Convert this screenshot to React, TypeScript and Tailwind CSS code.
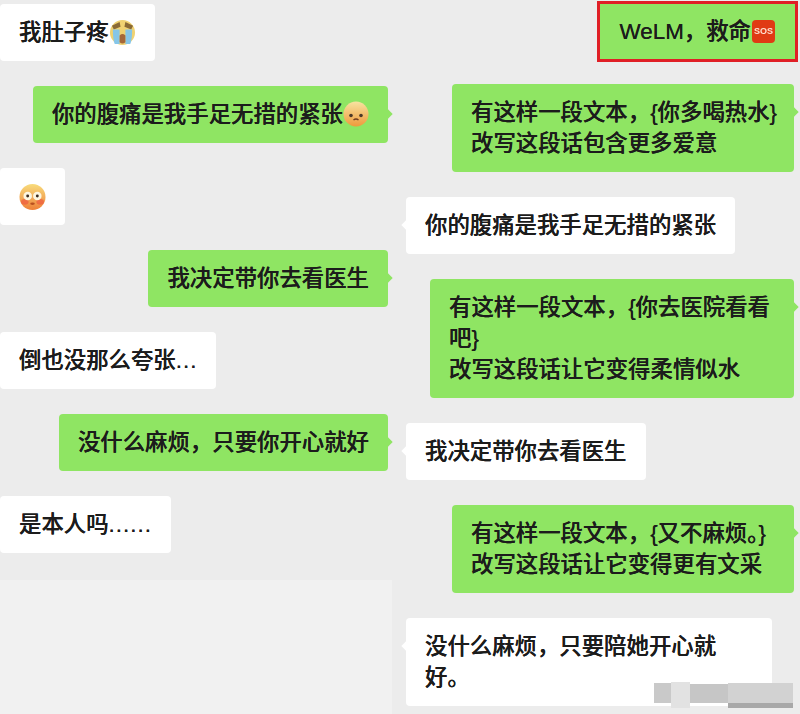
// App.tsx
const bubbleBase =
  "relative whitespace-nowrap rounded-[4px] px-[19px] py-[13px] text-[22.4px] leading-[31px] text-[#1c1c1c] [text-shadow:0_0_0.6px_#1c1c1c]";

function Tail({ side, color }: { side: "left" | "right"; color: string }) {
  return (
    <span
      className={`absolute top-[24px] h-[8px] w-[8px] rotate-45 ${color} ${
        side === "right" ? "right-[-3px]" : "left-[-3px]"
      }`}
    />
  );
}

function Green({ children, className = "" }: { children: React.ReactNode; className?: string }) {
  return (
    <div className={`${bubbleBase} self-end bg-[#8fe563] ${className}`}>
      {children}
      <Tail side="right" color="bg-[#8fe563]" />
    </div>
  );
}

function White({
  children,
  className = "",
  tail = false,
}: {
  children: React.ReactNode;
  className?: string;
  tail?: boolean;
}) {
  return (
    <div className={`${bubbleBase} self-start bg-white ${className}`}>
      {children}
      {tail && <Tail side="left" color="bg-white" />}
    </div>
  );
}

function CryEmoji() {
  return (
    <svg
      viewBox="0 0 28 28"
      className="relative top-[-2px] my-[-8px] inline-block h-[27px] w-[27px] align-middle"
    >
      <circle cx="14" cy="14" r="13" fill="#f0d272" />
      <path d="M3 7 L11 3 L12 8 L5 11Z M25 7 L17 3 L16 8 L23 11Z" fill="#8a6a36" />
      <path d="M4 11h7v15H6q-2-4-2-15zM17 11h7q0 11-2 15h-5z" fill="#86c6e8" />
      <path d="M11 17q3-3 6 0v7q-3 3-6 0z" fill="#a5683a" />
    </svg>
  );
}

function FrownEmoji() {
  return (
    <svg
      viewBox="0 0 26 26"
      className="relative top-[-2px] my-[-8px] inline-block h-[26px] w-[26px] align-middle"
    >
      <defs>
        <linearGradient id="frown" x1="0" y1="0" x2="0" y2="1">
          <stop offset="0" stopColor="#f8e3a0" />
          <stop offset="1" stopColor="#ee9a3c" />
        </linearGradient>
      </defs>
      <circle cx="13" cy="13" r="12.5" fill="url(#frown)" />
      <circle cx="8" cy="14.5" r="1.8" fill="#4d3a2a" />
      <circle cx="18" cy="14.5" r="1.8" fill="#4d3a2a" />
      <path d="M10.5 19q2.5-2 5 0" stroke="#6b3a1f" strokeWidth="1.4" fill="none" />
    </svg>
  );
}

function FlushedEmoji() {
  return (
    <svg viewBox="0 0 28 28" className="block h-[28px] w-[28px]">
      <defs>
        <linearGradient id="flushed" x1="0" y1="0" x2="0" y2="1">
          <stop offset="0" stopColor="#f8dc7c" />
          <stop offset="1" stopColor="#ee8038" />
        </linearGradient>
      </defs>
      <circle cx="14" cy="14" r="13.5" fill="url(#flushed)" />
      <ellipse cx="6" cy="19" rx="4" ry="3" fill="#ee5a40" opacity="0.7" />
      <ellipse cx="22" cy="19" rx="4" ry="3" fill="#ee5a40" opacity="0.7" />
      <circle cx="9" cy="13" r="4.4" fill="#fdf6e0" />
      <circle cx="19" cy="13" r="4.4" fill="#fdf6e0" />
      <circle cx="9" cy="13" r="1.5" fill="#3a2a20" />
      <circle cx="19" cy="13" r="1.5" fill="#3a2a20" />
      <ellipse cx="14" cy="21" rx="2.4" ry="1.2" fill="#b8501f" />
    </svg>
  );
}

function SosEmoji() {
  return (
    <span className="relative top-[-2px] my-[-8px] ml-[1px] inline-flex h-[23px] w-[23px] items-center justify-center rounded-[4px] bg-[#e03a14] align-middle text-[9px] leading-none font-bold text-[#ffe0d0] [text-shadow:none]">
      SOS
    </span>
  );
}

function Watermark() {
  return (
    <div className="absolute top-[682px] left-[654px] flex h-[26px] w-[139px]">
      <div className="mt-[1px] h-[20px] w-[17px] bg-[#c9c9c9]" />
      <div className="h-[26px] w-[19px] bg-[#e2e2e2]" />
      <div className="mt-[2px] h-[19px] w-[38px] bg-[#c6c6c6]" />
      <div className="flex w-[65px] flex-col">
        <div className="mt-[1px] h-[20px] bg-[#d2d2d2]" />
        <div className="h-[5px] bg-[#a8a8a8]" />
      </div>
    </div>
  );
}

export default function App() {
  return (
    <div className="h-[714px] w-[800px] overflow-hidden bg-[#ececec]">
      <div className="relative flex h-[714px] w-[800px] font-['Liberation_Sans','Noto_Sans_CJK_SC',sans-serif] font-medium blur-[0.4px]">
        <div className="relative flex w-[392px] flex-col gap-[25px] pt-[4px] pr-[4px]">
          <White>
            我肚子疼
            <CryEmoji />
          </White>
          <Green>
            你的腹痛是我手足无措的紧张
            <FrownEmoji />
          </Green>
          <White className="w-[65px]">
            <div className="flex h-[31px] items-center">
              <FlushedEmoji />
            </div>
          </White>
          <Green>我决定带你去看医生</Green>
          <White>
            倒也没那么夸张<span className="tracking-[1px]">...</span>
          </White>
          <Green>没什么麻烦，只要你开心就好</Green>
          <White>
            是本人吗<span className="tracking-[1px]">......</span>
          </White>
          <div className="mt-[2px] mr-[-4px] flex-1 bg-[#f1f1f1]" />
        </div>

        <div className="flex w-[408px] flex-col gap-[25px] pt-[1px] pr-[6px] pl-[14px]">
          <div className="relative mr-[-4px] mb-[-3px] self-end border-[3px] border-[#e01f26] bg-[#8fe563] px-[20px] py-[12px] text-[22.4px] leading-[31px] text-[#1c1c1c] [text-shadow:0_0_0.6px_#1c1c1c]">
            WeLM，救命
            <SosEmoji />
          </div>
          <Green className="w-[342px]">
            有这样一段文本，{"{"}你多喝热水{"}"}
            <br />
            改写这段话包含更多爱意
          </Green>
          <White tail>你的腹痛是我手足无措的紧张</White>
          <Green className="w-[364px]">
            有这样一段文本，{"{"}你去医院看看
            <br />
            吧{"}"}
            <br />
            改写这段话让它变得柔情似水
          </Green>
          <White tail>我决定带你去看医生</White>
          <Green className="w-[342px]">
            有这样一段文本，{"{"}又不麻烦。{"}"}
            <br />
            改写这段话让它变得更有文采
          </Green>
          <White tail className="w-[366px]">
            没什么麻烦，只要陪她开心就
            <br />
            好。
          </White>
        </div>

        <Watermark />
      </div>
    </div>
  );
}
